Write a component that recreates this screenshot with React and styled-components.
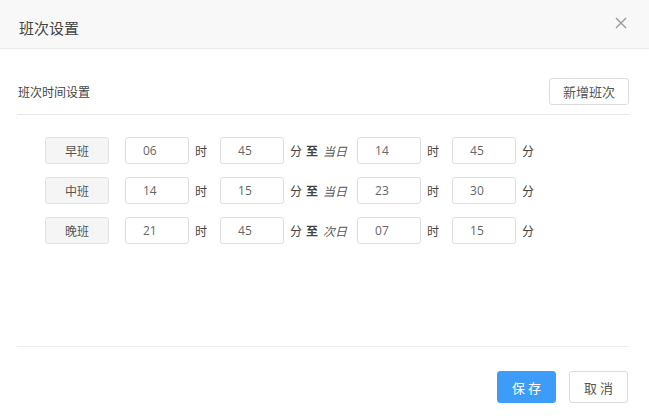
import React from 'react';
import styled, { createGlobalStyle } from 'styled-components';

const Global = createGlobalStyle`
    body {
        margin: 0;
        background: #fff;
        font-family: "Open Sans", "Noto Sans CJK SC", sans-serif;
        color: #333;
    }
`;

const Dialog = styled.div`
    width: 649px;
    height: 419px;
    background: #fff;
    display: flex;
    flex-direction: column;
`;

const Header = styled.div`
    height: 48px;
    padding: 0 20px 0 19px;
    background: #f8f8f8;
    border-bottom: 1px solid #ebebeb;
    display: flex;
    align-items: center;
    justify-content: space-between;
    box-shadow: 0 1px 2px rgba(0, 0, 0, 0.03);
`;

const Title = styled.div`
    font-size: 15px;
    color: #444;
    padding-top: 6px;
`;

const Close = styled.button`
    border: 0;
    background: none;
    padding: 0;
    width: 16px;
    height: 16px;
    display: flex;
    cursor: pointer;
    margin-top: -2px;
`;

const Body = styled.div`
    margin: 0 20px 0 17px;
`;

const Section = styled.div`
    padding: 29px 0 9px 1px;
    border-bottom: 1px solid #e8e8e8;
    display: flex;
    align-items: center;
    justify-content: space-between;
`;

const SectionTitle = styled.div`
    font-size: 12px;
    color: #444;
`;

const Button = styled.button`
    height: ${p => p.tall ? 32 : 27}px;
    width: ${p => p.w}px;
    border-radius: 3px;
    font-family: inherit;
    font-size: 13px;
    letter-spacing: ${p => p.spaced ? '3px' : '0'};
    text-indent: ${p => p.spaced ? '3px' : '0'};
    border: 1px solid ${p => p.primary ? '#3d9cf7' : '#dcdcdc'};
    background: ${p => p.primary ? '#3d9cf7' : '#fff'};
    color: ${p => p.primary ? '#fff' : '#555'};
    padding: 0;
    cursor: pointer;
`;

const Rows = styled.div`
    height: 209px;
    padding: 22px 0 0 28px;
    border-bottom: 1px solid #ececec;
    display: flex;
    flex-direction: column;
    gap: 13px;
`;

const Row = styled.div`
    display: flex;
    align-items: center;
    height: 27px;
`;

const Label = styled.div`
    width: 62px;
    height: 25px;
    border: 1px solid #e2e2e2;
    border-radius: 3px;
    background: #f5f5f5;
    font-size: 12px;
    color: #555;
    display: flex;
    align-items: center;
    justify-content: center;
    margin-right: 16px;
`;

const Input = styled.input`
    box-sizing: border-box;
    width: 64px;
    height: 27px;
    border: 1px solid #dedede;
    border-radius: 3px;
    padding: 0 0 0 17px;
    font-family: inherit;
    font-size: 12px;
    color: #666;
    outline: none;
`;

const Unit = styled.span`
    font-size: 12px;
    margin-left: ${p => p.l}px;
    margin-right: ${p => p.r}px;
    font-weight: ${p => p.bold ? 700 : 400};
    font-style: ${p => p.italic ? 'italic' : 'normal'};
    color: ${p => p.italic ? '#555' : '#444'};
`;

const Footer = styled.div`
    display: flex;
    justify-content: flex-end;
    gap: 13px;
    padding: 24px 1px 0 0;
`;

const shifts = [
    { name: '早班', sh: '06', sm: '45', day: '当日', eh: '14', em: '45' },
    { name: '中班', sh: '14', sm: '15', day: '当日', eh: '23', em: '30' },
    { name: '晚班', sh: '21', sm: '45', day: '次日', eh: '07', em: '15' },
];

const App = () => {
    return (
        <Dialog>
            <Global />
            <Header>
                <Title>班次设置</Title>
                <Close aria-label="关闭">
                    <svg width="16" height="16" viewBox="0 0 16 16">
                        <path d="M3 3 L13 13 M13 3 L3 13" stroke="#999" strokeWidth="1.4" />
                    </svg>
                </Close>
            </Header>
            <Body>
                <Section>
                    <SectionTitle>班次时间设置</SectionTitle>
                    <Button w={80}>新增班次</Button>
                </Section>
                <Rows>
                    {shifts.map(s => (
                        <Row key={s.name}>
                            <Label>{s.name}</Label>
                            <Input defaultValue={s.sh} />
                            <Unit l={6} r={13}>时</Unit>
                            <Input defaultValue={s.sm} />
                            <Unit l={6} r={4}>分</Unit>
                            <Unit bold l={0} r={5}>至</Unit>
                            <Unit italic l={0} r={10}>{s.day}</Unit>
                            <Input defaultValue={s.eh} />
                            <Unit l={6} r={13}>时</Unit>
                            <Input defaultValue={s.em} />
                            <Unit l={6} r={0}>分</Unit>
                        </Row>
                    ))}
                </Rows>
                <Footer>
                    <Button primary spaced tall w={59}>保存</Button>
                    <Button spaced tall w={59}>取消</Button>
                </Footer>
            </Body>
        </Dialog>
    );
};

export default App;
